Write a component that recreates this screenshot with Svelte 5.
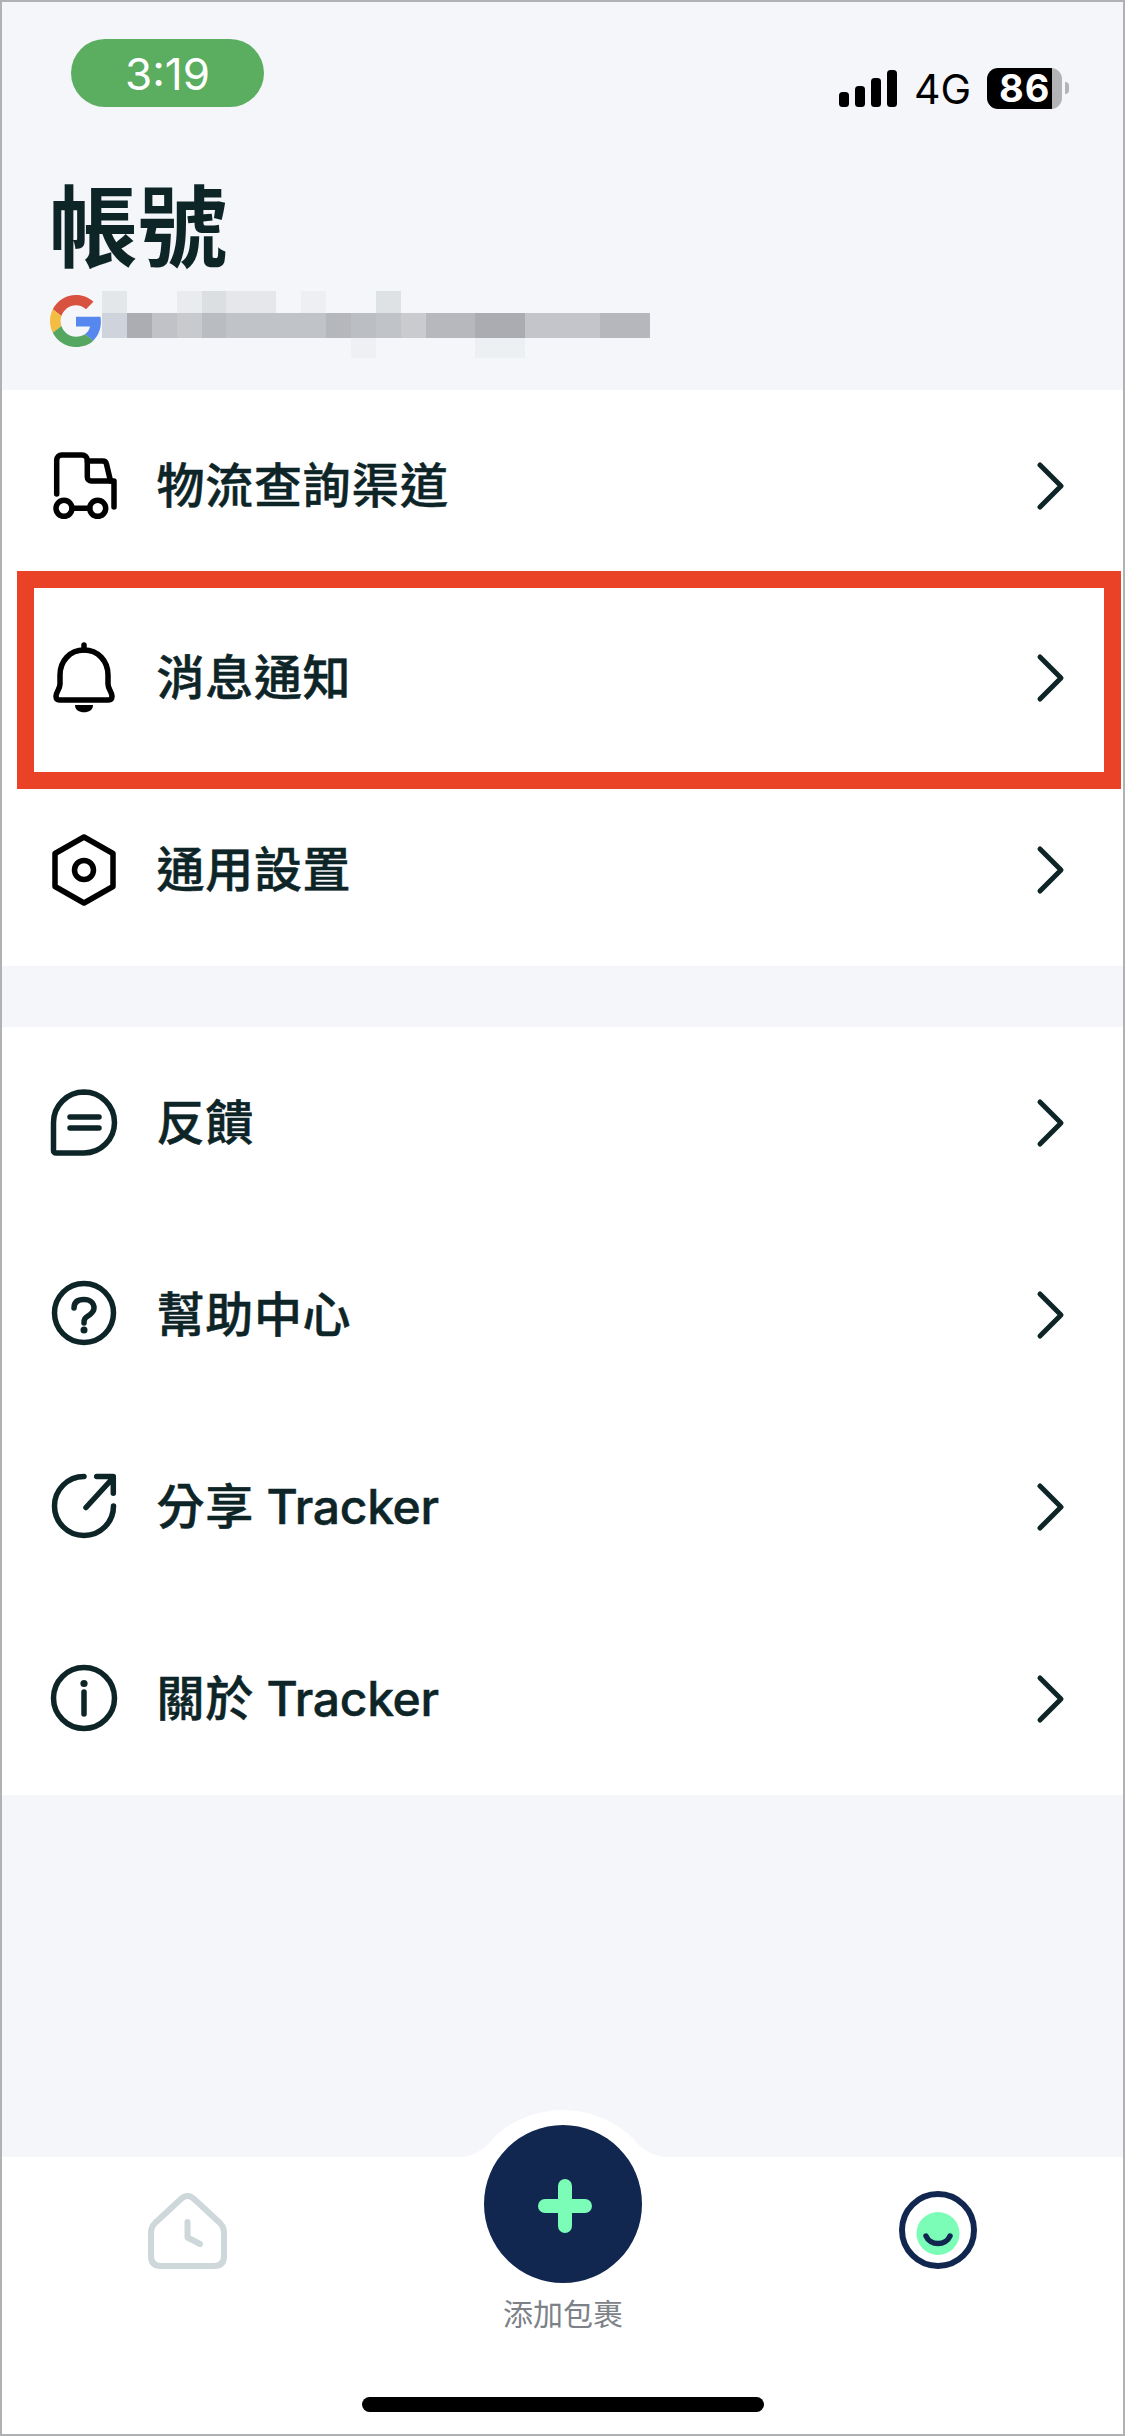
<script>
    // menu groups, icon names are matched in the markup below
    const groups = [
        [
            { label: "物流查詢渠道", icon: "truck" },
            { label: "消息通知", icon: "bell", marked: true },
            { label: "通用設置", icon: "hex" },
        ],
        [
            { label: "反饋", icon: "chat" },
            { label: "幫助中心", icon: "help" },
            { label: "分享", brand: " Tracker", icon: "share" },
            { label: "關於", brand: " Tracker", icon: "info" },
        ],
    ];

    // blurred email, one colour per mosaic cell
    const blank = null;
    const topRow = [
        "#e4e7ea", blank, blank, "#e9ebee", "#dcdfe2", "#e5e7ea", "#e5e7ea", blank, "#eeeff2", blank, blank,
        "#dfe2e4", blank, blank, blank, blank, blank, blank, blank, blank, blank, blank,
    ];
    const midRow = [
        "#cfd3dc", "#abadb2", "#c0c2c7", "#c8cace", "#b9bcc1", "#c0c3c8", "#c0c3c8", "#c0c3c8", "#c0c3c8", "#b5b7bc", "#bbbec3",
        "#c0c3c7", "#c9cbcf", "#b6b8bd", "#b6b8bd", "#aaacb1", "#aaacb1", "#c3c5ca", "#c3c5ca", "#c3c5ca", "#b5b7bc", "#b5b7bc",
    ];
    const lowRow = [
        blank, blank, blank, blank, blank, blank, blank, blank, blank, blank, "#eff0f3",
        blank, blank, blank, blank, "#ecf0f2", "#ecf0f2", blank, blank, blank, blank, blank,
    ];
    const mosaic = [...topRow, ...midRow, ...lowRow];

    const signal = [
        { x: 0, h: 15 },
        { x: 16, h: 21 },
        { x: 32, h: 29 },
        { x: 48, h: 37 },
    ];
</script>

<div class="frame">
    <header class="head">
        <div class="status">
            <div class="time">3:19</div>
            <div class="indicators">
                <svg class="signal" width="58" height="37" viewBox="0 0 58 37">
                    {#each signal as bar}
                        <rect x={bar.x} y={37 - bar.h} width="10" height={bar.h} rx="3.5" fill="#000" />
                    {/each}
                </svg>
                <span class="net">4G</span>
                <div class="battery"><span>86</span></div>
                <i class="nub"></i>
            </div>
        </div>
        <h1>帳號</h1>
        <div class="account">
            <svg class="google" width="52" height="54" viewBox="0 0 48 48">
                <path fill="#d9513f" d="M24 9.5c3.54 0 6.71 1.22 9.21 3.6l6.85-6.85C35.9 2.38 30.47 0 24 0 14.62 0 6.51 5.38 2.56 13.22l7.98 6.19C12.43 13.72 17.74 9.5 24 9.5z" />
                <path fill="#5587ee" d="M46.98 24.55c0-1.57-.15-3.09-.38-4.55H24v9.02h12.94c-.58 2.96-2.26 5.48-4.78 7.18l7.73 6c4.51-4.18 7.09-10.36 7.09-17.65z" />
                <path fill="#f2bd42" d="M10.53 28.59c-.48-1.45-.76-2.99-.76-4.59s.27-3.14.76-4.59l-7.98-6.19C.92 16.46 0 20.12 0 24c0 3.88.92 7.54 2.56 10.78l7.97-6.19z" />
                <path fill="#55a660" d="M24 48c6.48 0 11.93-2.13 16.03-5.81l-7.73-6c-2.15 1.45-4.92 2.3-8.3 2.3-6.26 0-11.57-4.22-13.47-9.91l-7.98 6.19C6.51 42.62 14.62 48 24 48z" />
            </svg>
            <div class="mosaic">
                {#each mosaic as cell}
                    <i style:background={cell}></i>
                {/each}
            </div>
        </div>
    </header>

    {#each groups as rows}
        <section class="group">
            {#each rows as row}
                <div class="row" class:marked={row.marked}>
                    <svg class="icon" class:black={["truck", "bell", "hex"].includes(row.icon)} width="72" height="72" viewBox="0 0 72 72">
                        {#if row.icon === "truck"}
                            <path d="M8.7 44V10a5 5 0 0 1 5-5H34a5.300 5.300 0 0 1 5.300 5.300V27a4 4 0 0 0 4 4H66V57" />
                            <path d="M39.300 11H54.500a4 4 0 0 1 4 3.200L62.500 31" />
                            <circle cx="16" cy="58.300" r="8" />
                            <circle cx="49.700" cy="58.300" r="8" />
                            <path d="M24 58.300H41.700" />
                        {:else if row.icon === "bell"}
                            <path d="M36 8C22 8 12 19 12 33V42C12 47 8 50 8 54C8 57 9.500 58 11.500 58H60.500C62.500 58 64 57 64 54C64 50 60 47 60 42V33C60 19 50 8 36 8Z" />
                            <path d="M36 3V8" />
                            <path class="solid" d="M27 63H45C45 68 41 70.300 36 70.300C31 70.300 27 68 27 63Z" />
                        {:else if row.icon === "hex"}
                            <path d="M36 3L65 19.500V52.500L36 69L7 52.500V19.500Z" />
                            <circle cx="36" cy="36" r="9.500" />
                        {:else if row.icon === "chat"}
                            <path d="M36 5A30.500 30.500 0 0 1 36 66H8a2.500 2.500 0 0 1-2.500-2.500V35.500A30.500 30.500 0 0 1 36 5Z" />
                            <path d="M22 30H51M22 41H51" />
                        {:else if row.icon === "help"}
                            <circle cx="36" cy="34" r="29.500" />
                            <path d="M26 29C26 23 30 20.500 36 20.500C42 20.500 46 24 46 29C46 33 43 35 40 37C37 39 36 40 36 44" />
                            <circle class="solid" cx="36" cy="51" r="3.500" />
                        {:else if row.icon === "share"}
                            <path d="M36 5.500A29.500 29.500 0 1 0 65.500 35" />
                            <path d="M38 36.500L64.500 7.500M48.700 5.500H65.300V22.300" />
                        {:else if row.icon === "info"}
                            <circle cx="36" cy="35" r="30.500" />
                            <circle class="solid" cx="36" cy="20.500" r="3.600" />
                            <path d="M36 29V51" />
                        {/if}
                    </svg>
                    <span class="label">{row.label}{#if row.brand}<span class="brand">{row.brand}</span>{/if}</span>
                    <svg class="chevron" width="30" height="50" viewBox="0 0 30 50">
                        <path d="M4 4L25 25L4 46" />
                    </svg>
                </div>
            {/each}
        </section>
    {/each}

    <nav class="tabs">
        <svg class="home" width="79" height="76" viewBox="0 0 79 76">
            <path d="M33.500 5.500L7 30Q3 34 3 39V63Q3 73 13 73H66Q76 73 76 63V39Q76 34 72 30L45.500 5.500Q39.500 .500 33.500 5.500Z" />
            <path d="M39.500 29V44.500L52 51" />
        </svg>
        <div class="add">
            <svg class="hump" width="200" height="47" viewBox="0 0 200 47">
                <path d="M0 47C11 45 20 40 27 32C42 14 70 0 100 0C130 0 158 14 173 32C180 40 189 45 200 47Z" fill="#fff" />
            </svg>
            <button class="plus" aria-label="添加包裹">
                <svg width="56" height="56" viewBox="0 0 56 56">
                    <path d="M28 8V48M8 28H48" />
                </svg>
            </button>
            <span>添加包裹</span>
        </div>
        <svg class="me" width="78" height="78" viewBox="0 0 78 78">
            <circle cx="39" cy="39" r="36" fill="none" stroke="#112750" stroke-width="6" />
            <circle cx="39" cy="42.500" r="21.500" fill="#7bfdb8" />
            <path d="M27 45C31 55 47 55 51 45" fill="none" stroke="#112750" stroke-width="5.500" stroke-linecap="round" />
        </svg>
        <div class="homebar"></div>
    </nav>
</div>

<style>
    :global(body) {
        margin: 0;
        background: #fff;
    }

    .frame {
        box-sizing: border-box;
        width: 1125px;
        height: 2436px;
        border: 2px solid #b0b1b3;
        background: #f4f6fa;
        display: flex;
        flex-direction: column;
        font-family: Inter, "Noto Sans CJK TC", sans-serif;
        color: #0e2528;
    }

    .head {
        height: 388px;
        box-sizing: border-box;
        flex: none;
    }

    .status {
        display: flex;
        justify-content: space-between;
        padding: 37px 54px 0 69px;
    }

    .time {
        width: 193px;
        height: 68px;
        border-radius: 34px;
        background: #5bae5f;
        color: #fff;
        font-family: Inter, sans-serif;
        font-size: 44px;
        line-height: 70px;
        text-align: center;
    }

    .indicators {
        display: flex;
        align-items: center;
        height: 68px;
        margin-top: 15px;
    }

    .signal {
        margin-right: 17px;
    }

    .net {
        font-family: Inter, sans-serif;
        font-size: 41px;
        color: #000;
        margin-right: 16px;
        margin-top: 2px;
    }

    .battery {
        width: 75px;
        height: 41px;
        border-radius: 11px;
        background: linear-gradient(90deg, #000 86.500%, #b4b4b6 86.500%);
        color: #fff;
        font-family: Inter, sans-serif;
        font-size: 38px;
        font-weight: 700;
        line-height: 41px;
        padding-left: 12px;
        box-sizing: border-box;
        letter-spacing: 1px;
    }

    .nub {
        width: 4px;
        height: 12px;
        margin-left: 3px;
        border-radius: 0 6px 6px 0;
        background: #b4b4b6;
    }

    h1 {
        margin: 54px 0 0 47px;
        font-size: 89px;
        line-height: 104px;
        font-weight: 700;
    }

    .account {
        display: flex;
        align-items: flex-start;
        margin: 11px 0 0 48px;
    }

    .google {
        margin-top: 3px;
        flex: none;
    }

    .mosaic {
        display: grid;
        grid-template-columns: repeat(22, 24.900px);
        grid-template-rows: 22px 25px 20px;
    }

    .group {
        background: #fff;
        flex: none;
    }

    .group + .group {
        margin-top: 61px;
    }

    .row {
        position: relative;
        display: flex;
        align-items: center;
        height: 192px;
        padding: 0 57px 0 46px;
    }

    /* annotation box drawn over the row */
    .marked::after {
        content: "";
        position: absolute;
        left: 15px;
        right: 2px;
        top: -11px;
        bottom: -15px;
        border: 17px solid #ea4226;
        pointer-events: none;
    }

    .icon {
        flex: none;
        fill: none;
        stroke: #0e2528;
        stroke-width: 5.500;
        stroke-linecap: round;
        stroke-linejoin: round;
    }

    .icon.black {
        stroke: #000;
    }

    .icon .solid {
        fill: #0e2528;
        stroke: none;
    }

    .icon.black .solid {
        fill: #000;
    }

    .label {
        margin-left: 36.500px;
        font-size: 48px;
        font-weight: 500;
        line-height: 64px;
        letter-spacing: 0.7px;
        -webkit-text-stroke: 0.5px #0e2528;
    }

    .brand {
        letter-spacing: -0.3px;
    }

    .chevron {
        margin-left: auto;
        flex: none;
        fill: none;
        stroke: #0e2528;
        stroke-width: 5;
        stroke-linecap: round;
        stroke-linejoin: round;
    }

    .tabs {
        position: relative;
        margin-top: auto;
        height: 277px;
        box-sizing: border-box;
        flex: none;
        background: #fff;
        display: flex;
        justify-content: space-between;
        align-items: flex-start;
        padding: 36px 146px 0;
    }

    .home {
        fill: none;
        stroke: #ced7da;
        stroke-width: 6;
        stroke-linecap: round;
        stroke-linejoin: round;
    }

    .add {
        position: relative;
        display: flex;
        flex-direction: column;
        align-items: center;
        margin-top: -68px;
    }

    .hump {
        position: absolute;
        top: -15px;
        left: -21px;
    }

    .plus {
        position: relative;
        width: 158px;
        height: 158px;
        border: none;
        padding: 0;
        border-radius: 50%;
        background: #112750;
        display: flex;
        align-items: center;
        justify-content: center;
    }

    .plus svg {
        fill: none;
        stroke: #7bfdb8;
        stroke-width: 14;
        stroke-linecap: round;
        margin: 4px 0 0 3px;
    }

    .add span {
        margin-top: 11px;
        font-size: 30px;
        line-height: 40px;
        color: #7c8288;
    }

    .me {
        margin-top: -2px;
    }

    .homebar {
        position: absolute;
        left: 360px;
        bottom: 22px;
        width: 402px;
        height: 15px;
        border-radius: 8px;
        background: #000;
    }
</style>
